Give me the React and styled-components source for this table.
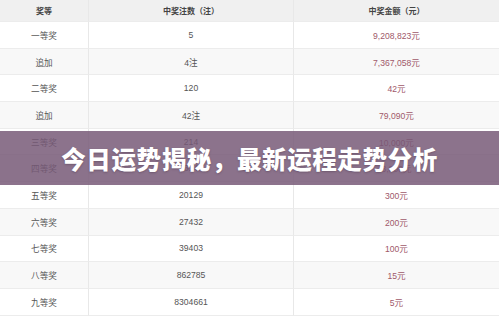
import React from "react";
import styled, { createGlobalStyle } from "styled-components";

const GlobalStyle = createGlobalStyle`
  html, body {
    margin: 0;
    padding: 0;
    background: #ffffff;
  }
  body {
    font-family: "Liberation Sans", "Noto Sans CJK SC", sans-serif;
  }
`;

const Page = styled.div`
  position: relative;
  width: 499px;
  height: 316px;
  overflow: hidden;
  background: #ffffff;
`;

const Table = styled.div`
  display: grid;
  grid-template-columns: 89px 205px 1fr;
  width: 100%;
`;

const Row = styled.div`
  display: contents;
`;

const Cell = styled.div`
  height: ${(props) => (props.$head ? "22px" : "26.7px")};
  display: flex;
  align-items: center;
  justify-content: center;
  box-sizing: border-box;
  border-bottom: 1px solid #ececec;
  border-right: ${(props) => (props.$last ? "none" : "1px solid #e8e8e8")};
  background: ${(props) =>
    props.$head ? "#f0f0f0" : props.$alt ? "#f8f8f8" : "#ffffff"};
  color: ${(props) => (props.$money ? "#a0586a" : "#555555")};
  font-size: ${(props) => (props.$head ? "8px" : "8.6px")};
  font-weight: ${(props) => (props.$head ? 700 : 400)};
  ${(props) => props.$head && "color: #444444;"}
`;

const Banner = styled.div`
  position: absolute;
  left: 0;
  right: 0;
  top: 131px;
  height: 54px;
  display: flex;
  align-items: center;
  justify-content: center;
  background: rgba(118, 88, 118, 0.84);
`;

const Title = styled.h1`
  margin: 0;
  color: #ffffff;
  font-family: "Noto Sans CJK SC", sans-serif;
  font-size: 24.5px;
  font-weight: 900;
  letter-spacing: 0.6px;
  text-shadow: 0 1px 2px rgba(60, 40, 60, 0.35);
`;

const rows = [
  ["一等奖", "5", "9,208,823元"],
  ["追加", "4注", "7,367,058元"],
  ["二等奖", "120", "42元"],
  ["追加", "42注", "79,090元"],
  ["三等奖", "214", "10,000元"],
  ["四等奖", "614", "3,000元"],
  ["五等奖", "20129", "300元"],
  ["六等奖", "27432", "200元"],
  ["七等奖", "39403", "100元"],
  ["八等奖", "862785", "15元"],
  ["九等奖", "8304661", "5元"],
];

const App = () => {
  return (
    <>
      <GlobalStyle />
      <Page>
        <Table>
          <Row>
            <Cell $head>奖等</Cell>
            <Cell $head>中奖注数（注）</Cell>
            <Cell $head $last>
              中奖金额（元）
            </Cell>
          </Row>
          {rows.map((r, i) => (
            <Row key={i}>
              <Cell $alt={i % 2 === 1}>{r[0]}</Cell>
              <Cell $alt={i % 2 === 1}>{r[1]}</Cell>
              <Cell $alt={i % 2 === 1} $money $last>
                {r[2]}
              </Cell>
            </Row>
          ))}
        </Table>
        <Banner>
          <Title>今日运势揭秘，最新运程走势分析</Title>
        </Banner>
      </Page>
    </>
  );
};

export default App;
